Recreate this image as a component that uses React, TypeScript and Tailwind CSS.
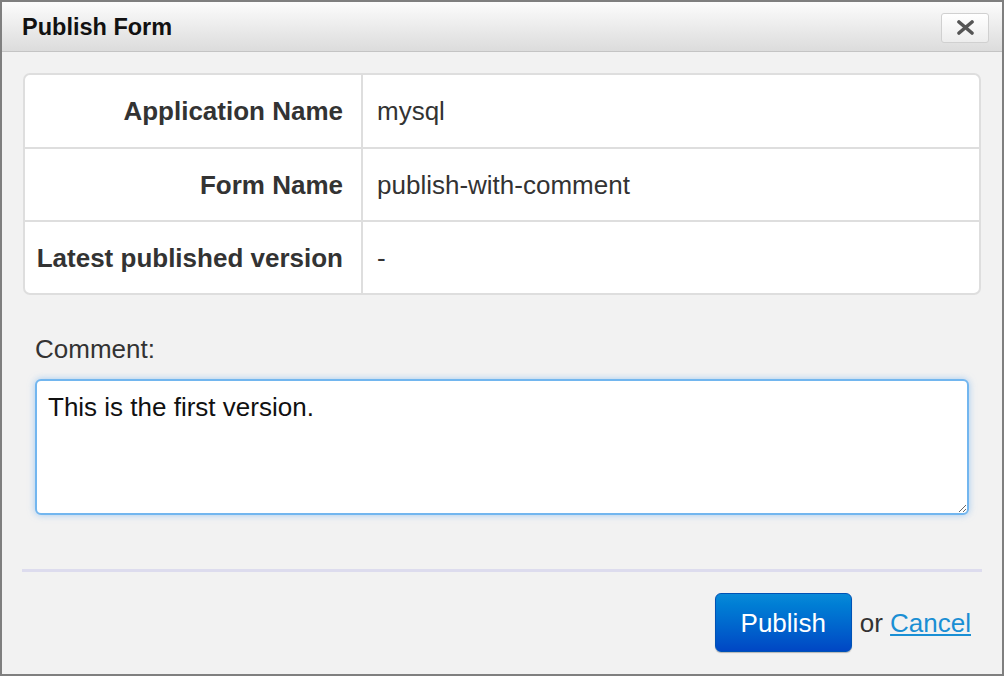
import React from "react";

const font = { fontFamily: '"Liberation Sans", Arial, Helvetica, sans-serif' };

function Row({ label, value, first }: { label: string; value: string; first?: boolean }) {
  return (
    <div className={`flex ${first ? "h-[72px]" : "h-[73px] border-t-2 border-[#dedede]"}`}>
      <div className="w-[338px] shrink-0 border-r-2 border-[#dedede] flex items-center justify-end pr-[18px] text-[26px] font-bold text-[#333] leading-[30px]">
        {label}
      </div>
      <div className="flex-1 flex items-center pl-[14px] text-[26px] text-[#333] leading-[30px]">{value}</div>
    </div>
  );
}

export default function App() {
  return (
    <div style={font} className="w-[1004px] h-[676px] border-2 border-[#7f7f7f] bg-[#f2f2f2] flex flex-col">
      <div className="h-[50px] shrink-0 border-b border-[#c4c4c4] bg-gradient-to-b from-[#fcfcfc] to-[#dcdcdc] flex items-center justify-between pl-[20px] pr-[13px]">
        <div className="text-[23.5px] font-bold text-[#111] leading-[28px] pt-[1px]">Publish Form</div>
        <button className="w-[48px] h-[30px] mt-[2px] rounded-[3px] border border-[#d0d0d0] bg-gradient-to-b from-[#ffffff] to-[#ededed] flex items-center justify-center">
          <svg width="19" height="15" viewBox="0 0 19 15">
            <path d="M3 2 L16 13 M16 2 L3 13" stroke="#555" strokeWidth="3.6" strokeLinecap="round" />
          </svg>
        </button>
      </div>
      <div className="flex-1 flex flex-col px-[21px] pt-[21px] pb-[21px]">
        <div className="bg-white border-2 border-[#dedede] rounded-[7px] overflow-hidden">
          <Row first label="Application Name" value="mysql" />
          <Row label="Form Name" value="publish-with-comment" />
          <Row label="Latest published version" value="-" />
        </div>
        <div className="px-[12px] pt-[39px]">
          <div className="text-[26px] text-[#333] leading-[30px]">Comment:</div>
          <textarea
            defaultValue="This is the first version."
            style={font}
            className="mt-[15px] block w-full h-[136px] rounded-[6px] border-2 border-[#72b6ef] bg-white px-[11px] pt-[11px] text-[26px] leading-[30px] text-[#111] outline-none shadow-[0_0_7px_rgba(110,175,240,0.6)]"
          />
        </div>
        <div className="mt-[54px] h-[3px] bg-[#dddcee] -mx-[1px]" />
        <div className="mt-[21px] flex items-center justify-end pr-[10px]">
          <button className="w-[137px] h-[59px] rounded-[6px] border border-[#0052b5] bg-gradient-to-b from-[#0a8ad8] to-[#0046c4] text-white text-[26px] leading-[30px] shadow-[0_1px_1px_rgba(0,0,0,0.25)]">
            Publish
          </button>
          <span className="ml-[8px] text-[26px] leading-[30px] text-[#333]">
            or{" "}
            <a href="#" className="text-[#1a8fd4] underline">
              Cancel
            </a>
          </span>
        </div>
      </div>
    </div>
  );
}
